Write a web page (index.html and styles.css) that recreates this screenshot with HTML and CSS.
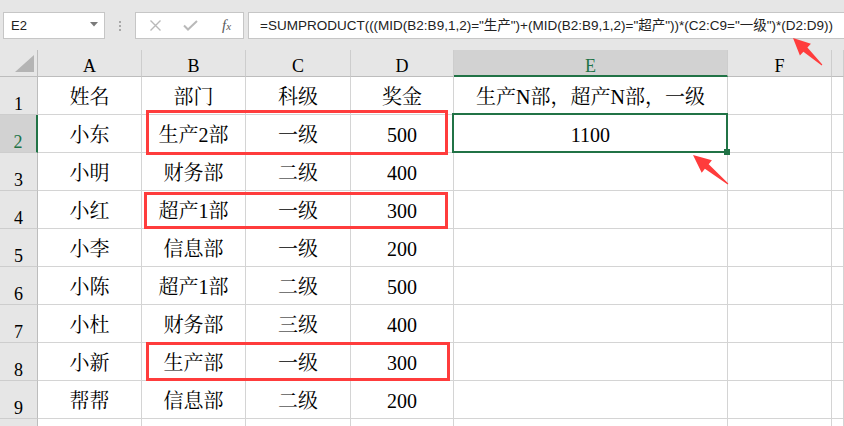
FILE: index.html
```html
<!DOCTYPE html>
<html>
<head>
<meta charset="utf-8">
<title>SUMPRODUCT 多条件求和</title>
<link rel="stylesheet" href="styles.css">
</head>
<body>
<div class="app">
	<div class="toolbar">
		<div class="namebox">
			<span>E2</span>
			<svg class="drop" width="8" height="5" viewBox="0 0 8 5"><path d="M0 0H8L4 4.5Z" fill="#7a7a7a"/></svg>
		</div>
		<div class="grip"><i></i><i></i><i></i></div>
		<div class="fxbtns">
			<svg width="13" height="11" viewBox="0 0 13 11"><path d="M1.5 0.5L11.5 10.5M11.5 0.5L1.5 10.5" stroke="#b9b9b9" stroke-width="1.4"/></svg>
			<svg width="15" height="11" viewBox="0 0 15 11"><path d="M1 5.5L5 9.5L14 1" stroke="#b9b9b9" stroke-width="2" fill="none"/></svg>
			<span class="fx">f<small>x</small></span>
		</div>
		<div class="formula">=SUMPRODUCT(((MID(B2:B9,1,2)="生产")+(MID(B2:B9,1,2)="超产"))*(C2:C9="一级")*(D2:D9))</div>
	</div>

	<div class="sheet">
		<div class="row head">
			<div class="cell corner"></div>
			<div class="cell ch">A</div>
			<div class="cell ch">B</div>
			<div class="cell ch">C</div>
			<div class="cell ch">D</div>
			<div class="cell ch sel">E</div>
			<div class="cell ch">F</div>
			<div class="cell ch"></div>
		</div>
		<div class="row">
			<div class="cell rh">1</div>
			<div class="cell">姓名</div><div class="cell">部门</div><div class="cell">科级</div><div class="cell">奖金</div>
			<div class="cell">生产N部，超产N部，一级</div><div class="cell"></div><div class="cell"></div>
		</div>
		<div class="row">
			<div class="cell rh sel">2</div>
			<div class="cell">小东</div><div class="cell">生产2部</div><div class="cell">一级</div><div class="cell">500</div>
			<div class="cell active">1100</div><div class="cell"></div><div class="cell"></div>
		</div>
		<div class="row">
			<div class="cell rh">3</div>
			<div class="cell">小明</div><div class="cell">财务部</div><div class="cell">二级</div><div class="cell">400</div>
			<div class="cell"></div><div class="cell"></div><div class="cell"></div>
		</div>
		<div class="row">
			<div class="cell rh">4</div>
			<div class="cell">小红</div><div class="cell">超产1部</div><div class="cell">一级</div><div class="cell">300</div>
			<div class="cell"></div><div class="cell"></div><div class="cell"></div>
		</div>
		<div class="row">
			<div class="cell rh">5</div>
			<div class="cell">小李</div><div class="cell">信息部</div><div class="cell">一级</div><div class="cell">200</div>
			<div class="cell"></div><div class="cell"></div><div class="cell"></div>
		</div>
		<div class="row">
			<div class="cell rh">6</div>
			<div class="cell">小陈</div><div class="cell">超产1部</div><div class="cell">二级</div><div class="cell">500</div>
			<div class="cell"></div><div class="cell"></div><div class="cell"></div>
		</div>
		<div class="row">
			<div class="cell rh">7</div>
			<div class="cell">小杜</div><div class="cell">财务部</div><div class="cell">三级</div><div class="cell">400</div>
			<div class="cell"></div><div class="cell"></div><div class="cell"></div>
		</div>
		<div class="row">
			<div class="cell rh">8</div>
			<div class="cell">小新</div><div class="cell">生产部</div><div class="cell">一级</div><div class="cell">300</div>
			<div class="cell"></div><div class="cell"></div><div class="cell"></div>
		</div>
		<div class="row">
			<div class="cell rh">9</div>
			<div class="cell">帮帮</div><div class="cell">信息部</div><div class="cell">二级</div><div class="cell">200</div>
			<div class="cell"></div><div class="cell"></div><div class="cell"></div>
		</div>
		<div class="row">
			<div class="cell rh"></div>
			<div class="cell"></div><div class="cell"></div><div class="cell"></div><div class="cell"></div>
			<div class="cell"></div><div class="cell"></div><div class="cell"></div>
		</div>
	</div>

	<!-- 标注 -->
	<div class="mark m1"></div>
	<div class="mark m2"></div>
	<div class="mark m3"></div>
	<svg class="arrows" width="844" height="426" viewBox="0 0 844 426">
		<polygon fill="#ff3c3c" points="793,38 810.9,43.7 807.4,47.4 822.3,64.6 821.7,65.4 803.4,51.8 799.9,55.5"/>
		<polygon fill="#ff3c3c" points="693,155 711.9,160.3 708.7,164.2 728.3,183.6 727.7,184.4 704.9,168.8 701.7,172.7"/>
	</svg>
</div>
</body>
</html>
```

FILE: styles.css
```css
* { box-sizing: border-box; }
body {
 margin: 0;
 background: #fff;
 font-family: "Liberation Serif", "Noto Serif CJK SC", "Noto Sans CJK SC", serif;
 color: #000;
}
.app {
 position: relative;
 width: 844px;
 height: 426px;
 overflow: hidden;
}

/* 编辑栏 */
.toolbar {
 height: 50px;
 background: #e6e6e6;
 display: flex;
 align-items: flex-start;
 padding: 12px 0 0 3px;
 font: 13px "Liberation Sans", "Noto Sans CJK SC", sans-serif;
 color: #222;
}
.namebox {
 width: 102px;
 height: 27px;
 background: #fff;
 border: 1px solid #c6c6c6;
 display: flex;
 align-items: center;
 justify-content: space-between;
 padding: 0 6px 0 7px;
}
.drop { margin-bottom: 2px; }
.grip {
 width: 30px;
 height: 27px;
 display: flex;
 flex-direction: column;
 align-items: center;
 justify-content: center;
 gap: 2px;
}
.grip i {
 display: block;
 width: 2px;
 height: 2px;
 background: #a8a8a8;
}
.fxbtns {
 width: 109px;
 height: 27px;
 background: #fff;
 border: 1px solid #c6c6c6;
 display: flex;
 align-items: center;
 padding-left: 13px;
 gap: 21px;
}
.fx {
 font: italic 15px "Liberation Serif", serif;
 color: #5a5a5a;
 margin-left: 3px;
}
.fx small { font-size: 11px; }
.formula {
 flex: 1;
 height: 27px;
 margin-left: 4px;
 background: #fff;
 border: 1px solid #c6c6c6;
 border-right: 0;
 padding: 0 0 0 11px;
 font-size: 13.5px;
 line-height: 25px;
 white-space: nowrap;
}

/* 表格 */
.row {
 display: grid;
 grid-template-columns: 38px 104px 104px 105px 103px 274px 104px 12px;
 height: 38px;
}
.row.head { height: 27px; }
.cell {
 position: relative;
 border-right: 1px solid #d4d4d4;
 border-bottom: 1px solid #d4d4d4;
 display: flex;
 align-items: flex-end;
 justify-content: center;
 font-size: 20px;
 line-height: 22px;
 padding-bottom: 6px;
 white-space: nowrap;
}
.ch, .rh, .corner {
 background: #e6e6e6;
 font-size: 18px;
 line-height: 18px;
 padding-bottom: 1px;
}
.ch {
 border-right-color: #cdcdcd;
 border-bottom-color: #bdbdbd;
}
.rh {
 border-right-color: #bdbdbd;
 border-bottom-color: #cdcdcd;
}
.corner {
 border-right-color: #bdbdbd;
 border-bottom-color: #bdbdbd;
}
.corner::after {
 content: "";
 position: absolute;
 right: 3px;
 bottom: 4px;
 width: 19px;
 height: 17px;
 background: #b4b4b4;
 clip-path: polygon(100% 0, 100% 100%, 0 100%);
}
.ch.sel {
 background: #d2d2d2;
 color: #217346;
 border-bottom: 2px solid #217346;
 padding-bottom: 0;
}
.rh.sel {
 background: #d2d2d2;
 color: #217346;
 border-right: 2px solid #217346;
}
.active::after {
 content: "";
 position: absolute;
 top: -2px;
 left: -2px;
 right: -1px;
 bottom: -1px;
 border: 2px solid #217346;
}
.active::before {
 content: "";
 position: absolute;
 right: -3px;
 bottom: -3px;
 width: 6px;
 height: 6px;
 background: #217346;
 z-index: 1;
}

/* 红框和箭头 */
.mark {
 position: absolute;
 border: 3px solid #ff3c3c;
}
.m1 { left: 146px; top: 110px; width: 302px; height: 45px; }
.m2 { left: 144px; top: 192px; width: 304px; height: 37px; }
.m3 { left: 146px; top: 342px; width: 304px; height: 39px; }
.arrows {
 position: absolute;
 left: 0;
 top: 0;
 pointer-events: none;
}
```
